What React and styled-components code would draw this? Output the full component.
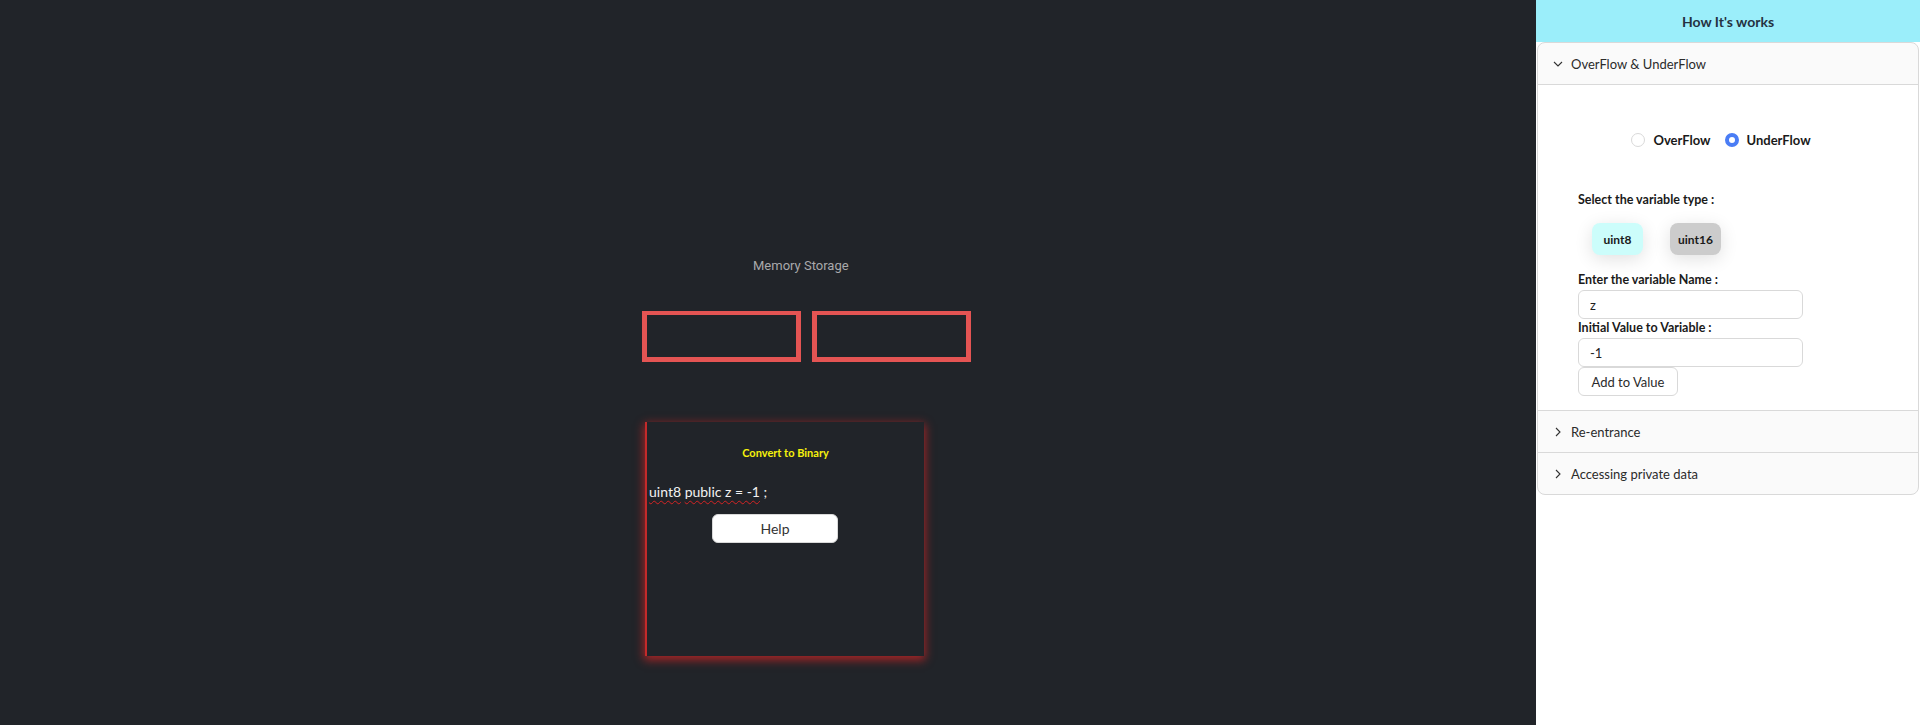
import React, {useState} from "react";
import styled, {createGlobalStyle} from "styled-components";

const GlobalStyle = createGlobalStyle`
  html, body {
    margin: 0;
    padding: 0;
    height: 100%;
  }
  body {
    font-family: Lato, "Liberation Sans", sans-serif;
    background: #212429;
  }
  * {
    box-sizing: border-box;
  }
`;

const ChevronDown = () => (
  <svg width="10" height="10" viewBox="0 0 10 10">
    <path d="M1 3 L5 7 L9 3" fill="none" stroke="#333" strokeWidth="1.1" />
  </svg>
);

const ChevronRight = () => (
  <svg width="10" height="10" viewBox="0 0 10 10">
    <path d="M3 1 L7 5 L3 9" fill="none" stroke="#333" strokeWidth="1.1" />
  </svg>
);

const App = () => {
  const [mode, setMode] = useState("under");
  const [varType, setVarType] = useState("uint8");
  const [name, setName] = useState("z");
  const [value, setValue] = useState("-1");

  return (
    <>
      <GlobalStyle />
      <Page>
        <Main>
          <StorageTitle>Memory Storage</StorageTitle>
          <SlotRow>
            <Slot />
            <Slot />
          </SlotRow>
          <BinaryCard>
            <CardTitle>Convert to Binary</CardTitle>
            <CodeLine>
              <Squiggle>uint8</Squiggle> <Squiggle>public z = -1</Squiggle> ;
            </CodeLine>
            <HelpButton>Help</HelpButton>
          </BinaryCard>
        </Main>

        <Sidebar>
          <SideHeader>How It's works</SideHeader>
          <Collapse>
            <PanelHeader>
              <ChevronDown />
              <span>OverFlow &amp; UnderFlow</span>
            </PanelHeader>
            <PanelBody>
              <RadioRow>
                <RadioLabel onClick={() => setMode("over")}>
                  <RadioDot checked={mode === "over"} />
                  OverFlow
                </RadioLabel>
                <RadioLabel onClick={() => setMode("under")}>
                  <RadioDot checked={mode === "under"} />
                  UnderFlow
                </RadioLabel>
              </RadioRow>

              <Form>
                <FieldLabel>Select the variable type :</FieldLabel>
                <TypeRow>
                  <TypeButton selected={varType === "uint8"} onClick={() => setVarType("uint8")}>uint8</TypeButton>
                  <TypeButton selected={varType === "uint16"} onClick={() => setVarType("uint16")}>uint16</TypeButton>
                </TypeRow>
                <FieldLabel spaced>Enter the variable Name :</FieldLabel>
                <TextInput value={name} onChange={e => setName(e.target.value)} />
                <FieldLabel>Initial Value to Variable :</FieldLabel>
                <TextInput value={value} onChange={e => setValue(e.target.value)} />
                <AddButton>Add to Value</AddButton>
              </Form>
            </PanelBody>

            <PanelHeader>
              <ChevronRight />
              <span>Re-entrance</span>
            </PanelHeader>
            <PanelHeader last>
              <ChevronRight />
              <span>Accessing private data</span>
            </PanelHeader>
          </Collapse>
        </Sidebar>
      </Page>
    </>
  );
};

const Page = styled.div`
  display: flex;
  height: 100vh;
`;

const Main = styled.div`
  flex: 1;
  display: flex;
  flex-direction: column;
  align-items: flex-start;
  padding: 258px 0 0 642px;
  background: #212429;
`;

const StorageTitle = styled.div`
  margin-left: 111px;
  font-family: Roboto, "Liberation Sans", sans-serif;
  font-size: 13px;
  line-height: 16px;
  color: #a9a9ab;
`;

const SlotRow = styled.div`
  display: flex;
  gap: 11px;
  margin-top: 37px;
`;

const Slot = styled.div`
  width: 159px;
  height: 51px;
  border: 5px solid #e45453;
  border-top-width: 4px;
`;

const BinaryCard = styled.div`
  width: 279px;
  height: 234px;
  margin: 60px 0 0 3px;
  padding: 24px 2px 0;
  display: flex;
  flex-direction: column;
  border-left: 2px solid #c42a2a;
  box-shadow: 0 3px 9px 1px rgba(214, 38, 38, 0.75);
`;

const CardTitle = styled.div`
  text-align: center;
  font-size: 11px;
  line-height: 14px;
  font-weight: 700;
  color: #f6f10c;
`;

const CodeLine = styled.div`
  margin-top: 23px;
  font-size: 14px;
  line-height: 18px;
  color: #f2f2f2;
`;

const Squiggle = styled.span`
  text-decoration: underline wavy #d42424;
  text-decoration-thickness: 1px;
  text-underline-offset: 3px;
`;

const HelpButton = styled.button`
  align-self: flex-start;
  margin: 13px 0 0 63px;
  width: 126px;
  height: 29px;
  border: 1px solid #d9d9d9;
  border-radius: 6px;
  background: #fff;
  font-family: Lato, "Liberation Sans", sans-serif;
  font-size: 14px;
  color: #333;
`;

const Sidebar = styled.div`
  width: 384px;
  display: flex;
  flex-direction: column;
  background: #fff;
  color: #1f1f1f;
`;

const SideHeader = styled.div`
  height: 42px;
  display: flex;
  align-items: center;
  justify-content: center;
  background: #9beefa;
  font-size: 14px;
  font-weight: 700;
  color: #253241;
`;

const Collapse = styled.div`
  margin: 0 1px;
  border: 1px solid #d9d9d9;
  border-radius: 8px;
  overflow: hidden;
  background: #fafafa;
`;

const PanelHeader = styled.div`
  height: ${p => (p.last ? "41px" : "42px")};
  display: flex;
  align-items: center;
  gap: 8px;
  padding-left: 15px;
  border-bottom: ${p => (p.last ? "none" : "1px solid #d9d9d9")};
  font-size: 13px;
  color: #2b2b2b;
  cursor: pointer;
`;

const PanelBody = styled.div`
  padding: 45px 0 14px;
  background: #fff;
  border-bottom: 1px solid #d9d9d9;
`;

const RadioRow = styled.div`
  display: flex;
  justify-content: center;
  gap: 14px;
  padding-right: 14px;
  height: 20px;
`;

const RadioLabel = styled.label`
  display: flex;
  align-items: center;
  gap: 8px;
  font-size: 13px;
  font-weight: 700;
  color: #1a1a1a;
  cursor: pointer;
`;

const RadioDot = styled.span`
  width: 14px;
  height: 14px;
  border-radius: 50%;
  border: ${p => (p.checked ? "4px solid #4a7df5" : "1px solid #d9d9d9")};
  background: #fff;
`;

const Form = styled.div`
  display: flex;
  flex-direction: column;
  align-items: flex-start;
  margin: 41px 0 0 40px;
`;

const FieldLabel = styled.div`
  margin-top: ${p => (p.spaced ? "16px" : "0")};
  font-size: 12.5px;
  line-height: 18px;
  font-weight: 700;
  color: #1a1a1a;
`;

const TypeRow = styled.div`
  display: flex;
  gap: 27px;
  margin: 14px 0 0 14px;
`;

const TypeButton = styled.button`
  width: 51px;
  height: 32px;
  border: none;
  border-radius: 8px;
  background: ${p => (p.selected ? "#ccfdfb" : "#cccccc")};
  box-shadow: 0 4px 18px rgba(0, 0, 0, 0.12);
  font-family: Lato, "Liberation Sans", sans-serif;
  font-size: 12px;
  font-weight: 700;
  color: #1a1a1a;
  cursor: pointer;
`;

const TextInput = styled.input`
  margin-top: 1px;
  width: 225px;
  height: 29px;
  padding: 0 11px;
  border: 1px solid #d9d9d9;
  border-radius: 6px;
  font-family: Lato, "Liberation Sans", sans-serif;
  font-size: 13px;
  color: #1f1f1f;
  outline: none;
`;

const AddButton = styled.button`
  width: 100px;
  height: 29px;
  border: 1px solid #d9d9d9;
  border-radius: 6px;
  background: #fff;
  font-family: Lato, "Liberation Sans", sans-serif;
  font-size: 13px;
  color: #2b2b2b;
  cursor: pointer;
`;

export default App;
